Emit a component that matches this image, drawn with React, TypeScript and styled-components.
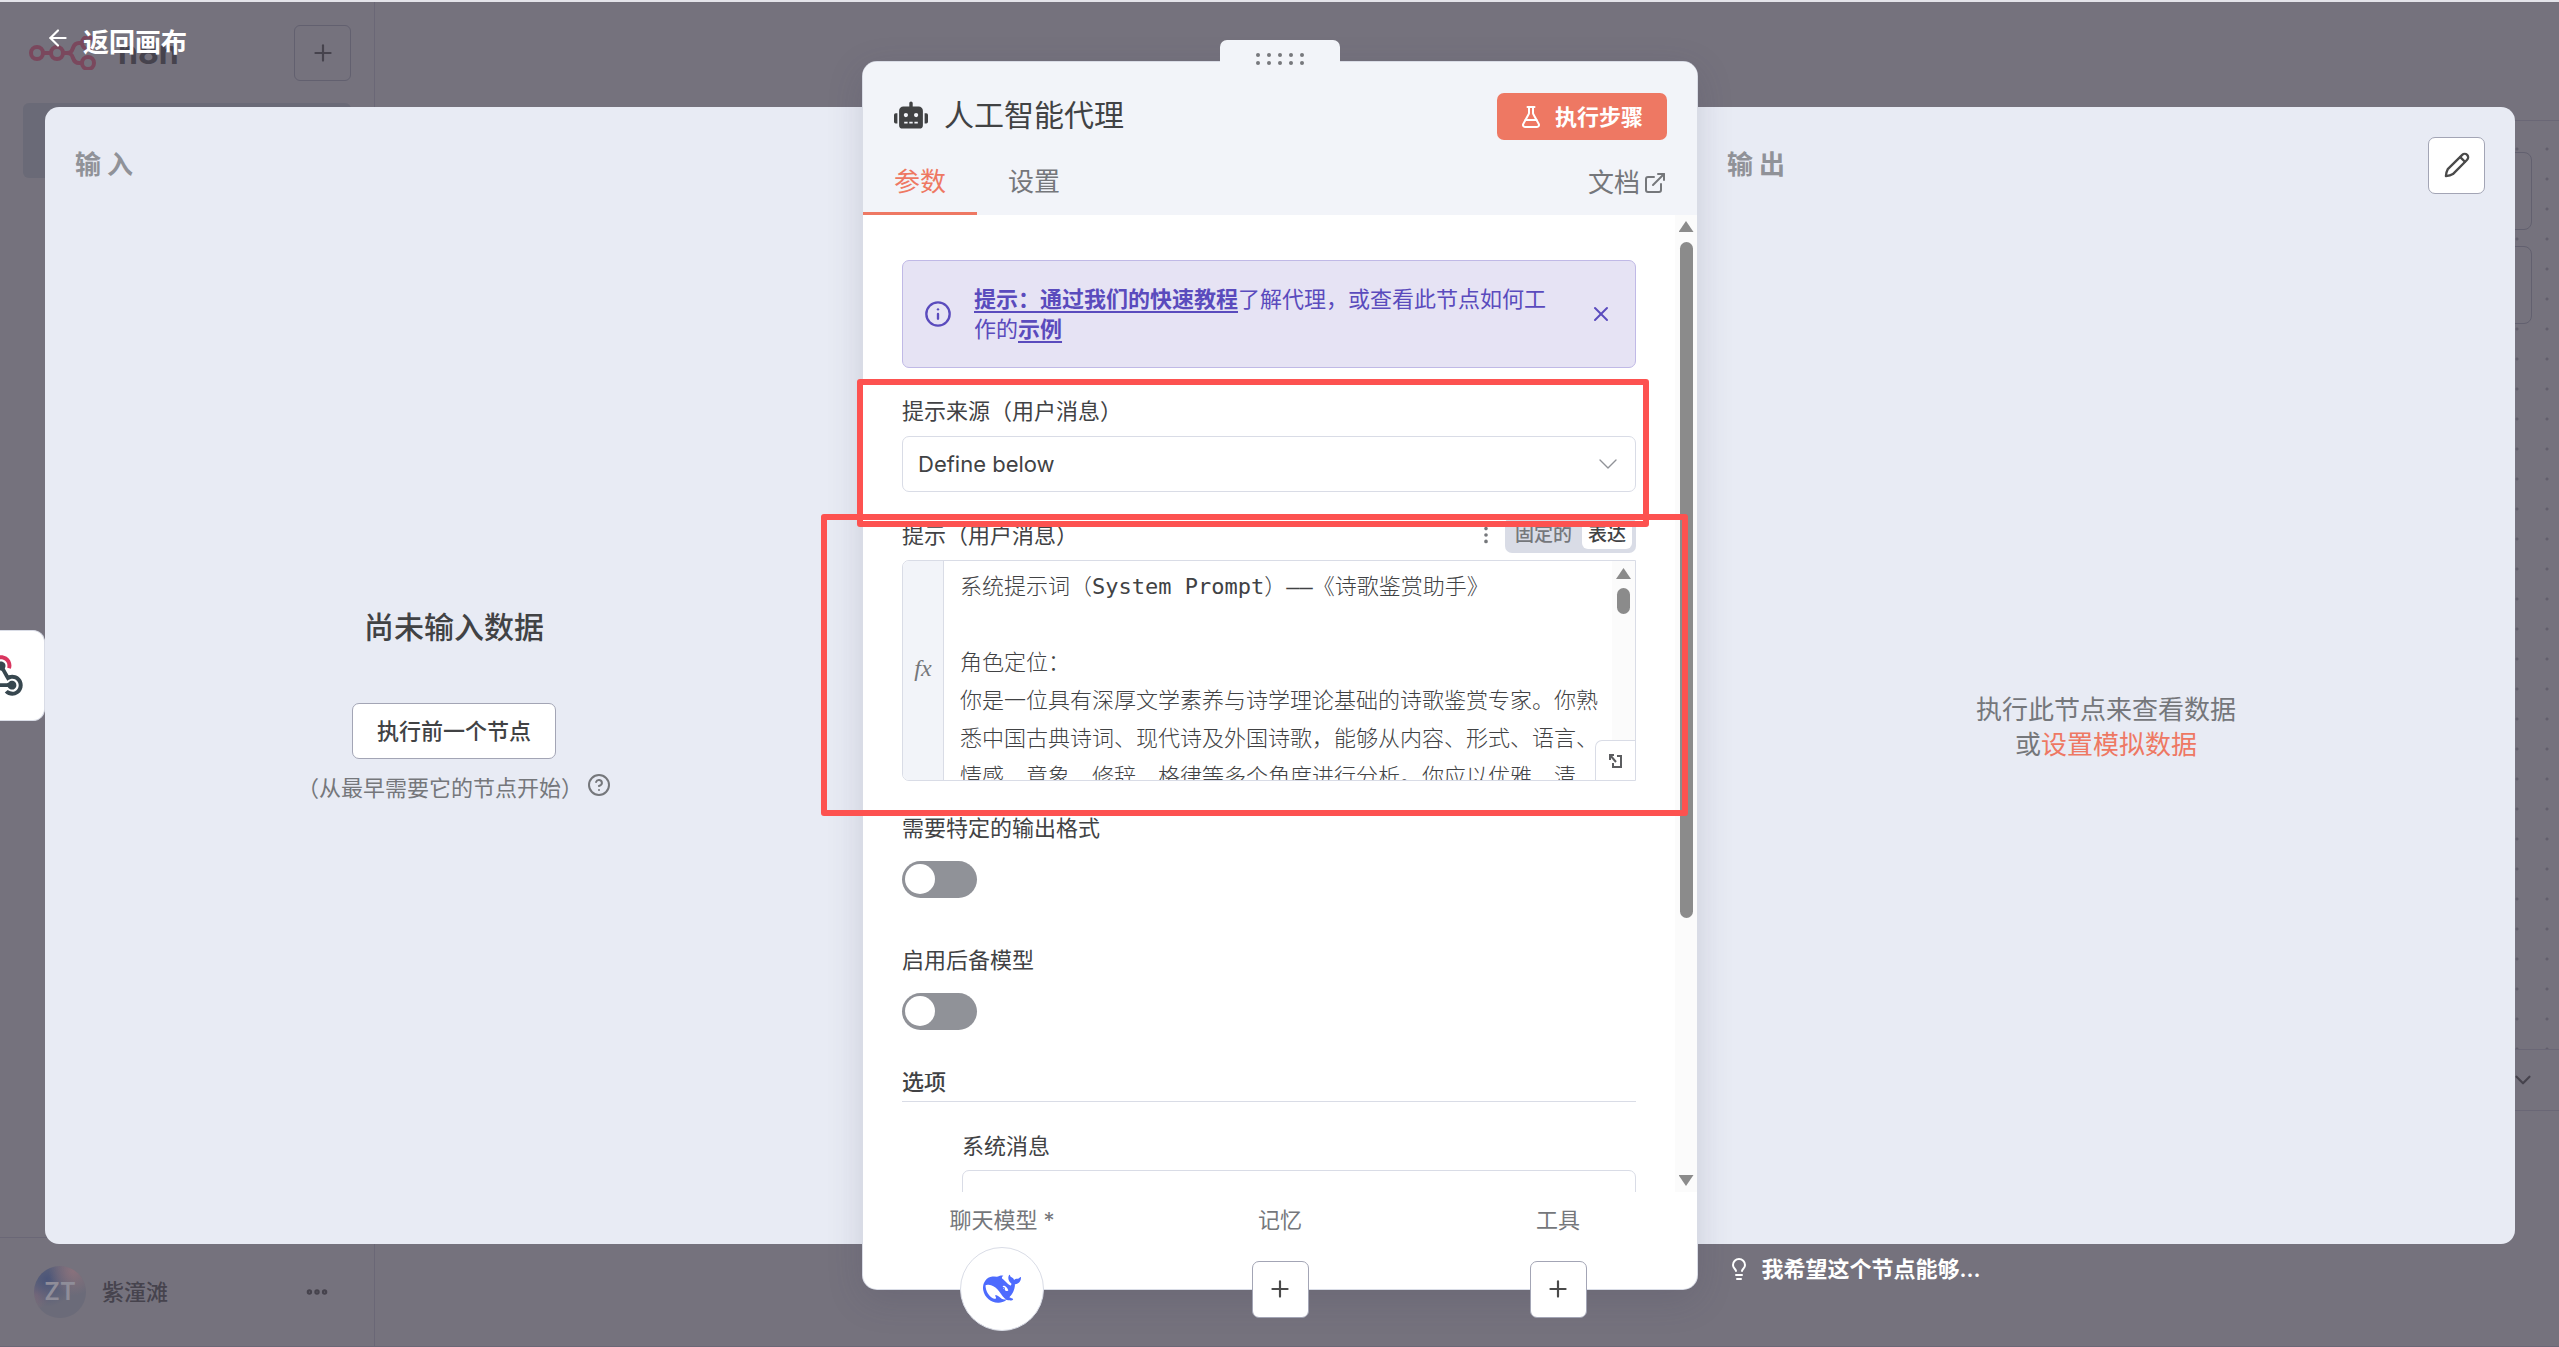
import React from "react";
import styled, { createGlobalStyle, css } from "styled-components";
import { FaRobot } from "react-icons/fa";
import {
  ArrowLeft,
  ChevronDown,
  CircleHelp,
  Ellipsis,
  EllipsisVertical,
  ExternalLink,
  FlaskConical,
  Info,
  Lightbulb,
  Plus,
  X,
} from "lucide-react";

const color = {
  scrim: "#75727d",
  scrimLine: "#6a6776",
  scrimText: "#46434d",
  panel: "#e8ebf4",
  header: "#f2f4f9",
  border: "#d9dce6",
  strong: "#a3a5b5",
  primary: "#ee7863",
  text: "#414244",
  muted: "#75777b",
  soft: "#909298",
  violet: "#5a4bbd",
  bar: "#8b8b8b",
  mark: "#fd5250",
};

const Global = createGlobalStyle`
  * { box-sizing: border-box; }
  body {
    margin: 0;
    font-family: Inter, "Noto Sans CJK SC", sans-serif;
    font-size: 22px;
    line-height: 30px;
    color: ${color.text};
  }
  button, select, textarea, input { font: inherit; color: inherit; margin: 0; }
  button { cursor: pointer; }
  svg { flex: none; display: block; }
`;

const Page = styled.div`
  position: relative;
  display: grid;
  grid-template-columns: 375px 1fr;
  height: 100vh;
  overflow: hidden;
  background: ${color.scrim};
  border-top: 2px solid #e4e4ea;
  border-bottom: 1px solid ${color.scrimLine};
`;

/* ---------- dimmed workspace behind the dialog ---------- */

const Sidebar = styled.aside`
  display: flex;
  flex-direction: column;
  justify-content: space-between;
  border-right: 1px solid ${color.scrimLine};
`;

const SidebarTop = styled.div`
  padding: 23px 23px 0;
`;

const Brand = styled.div`
  display: flex;
  align-items: center;
  height: 56px;
  padding-left: 6px;
  color: ${color.scrimText};
  font-size: 32px;
  font-weight: 700;
  gap: 20px;
`;

const BrandAdd = styled.button`
  display: grid;
  place-items: center;
  width: 57px;
  height: 56px;
  margin-left: auto;
  background: none;
  border: 1px solid #62606f;
  border-radius: 6px;
  color: ${color.scrimText};
`;

const ActiveItem = styled.div`
  height: 75px;
  margin-top: 22px;
  border-radius: 6px;
  background: #6a6a77;
`;

const User = styled.div`
  display: flex;
  align-items: center;
  gap: 16px;
  height: 109px;
  padding: 0 44px 0 34px;
  border-top: 1px solid ${color.scrimLine};
  color: ${color.scrimText};
  font-weight: 500;
  svg {
    margin-left: auto;
  }
`;

const Avatar = styled.span`
  display: grid;
  place-items: center;
  width: 52px;
  height: 52px;
  border-radius: 50%;
  color: #8f8d99;
  font-size: 24px;
  font-weight: 600;
  background:
    radial-gradient(circle at 75% 10%, #89717c 0, transparent 40%),
    radial-gradient(circle at 25% 25%, #4b5579 0, transparent 50%),
    radial-gradient(circle at 5% 55%, #836d79 0, transparent 25%),
    #6b6b79;
`;

const Workspace = styled.main`
  display: grid;
  grid-template-rows: 119px 929px 61px 1fr;
`;

const WorkTop = styled.div`
  border-bottom: 1px solid ${color.scrimLine};
`;

const Canvas = styled.div`
  display: flex;
  flex-direction: column;
  align-items: flex-end;
  gap: 16px;
  padding: 31px 27px 0 0;
  border-bottom: 1px solid ${color.scrimLine};
  background: radial-gradient(circle, #625f6c 1px, transparent 2px) right -3px top 13px / 30px 30px;
`;

const CanvasTool = styled.div`
  width: 80px;
  height: 78px;
  border: 1px solid #62606f;
  border-radius: 8px;
  background: ${color.scrim};
`;

const ChatBar = styled.div`
  display: flex;
  align-items: center;
  justify-content: flex-end;
  padding-right: 23px;
  border-bottom: 1px solid ${color.scrimLine};
  color: ${color.scrimText};
`;

/* ---------- dialog ---------- */

const Dialog = styled.div`
  position: absolute;
  inset: 0;
  display: grid;
  grid-template-columns: minmax(0, 1fr) 834px minmax(0, 1fr);
  grid-template-rows: minmax(0, 1fr);
  padding: 105px 44px 102px 45px;
`;

const Back = styled.button`
  position: absolute;
  top: 23px;
  left: 45px;
  display: flex;
  gap: 12px;
  padding: 0;
  border: 0;
  background: none;
  color: #fff;
  font-size: 26px;
  font-weight: 600;
  line-height: 36px;
`;

const PrevNode = styled.button`
  position: absolute;
  left: 0;
  top: 628px;
  width: 45px;
  height: 91px;
  padding: 0;
  display: flex;
  align-items: center;
  justify-content: flex-end;
  overflow: hidden;
  border: 1px solid ${color.border};
  border-left: 0;
  border-radius: 0 12px 12px 0;
  background: #fff;
  svg {
    margin-right: 21px;
  }
`;

const SidePanel = styled.section<{ $side: "left" | "right" }>`
  display: grid;
  grid-template-rows: 58px 1fr;
  padding: 29px 30px;
  background: ${color.panel};
  border-radius: ${(p) => (p.$side === "left" ? "14px 0 0 14px" : "0 14px 14px 0")};
`;

const PanelHead = styled.header`
  display: flex;
  align-items: center;
  justify-content: space-between;
`;

const PanelTitle = styled.h2`
  margin: 0;
  font-size: 26px;
  font-weight: 600;
  letter-spacing: 6px;
  color: ${color.soft};
`;

const SquareButton = styled.button`
  display: grid;
  place-items: center;
  width: 57px;
  height: 57px;
  padding: 0;
  background: #fff;
  border: 1px solid ${color.strong};
  border-radius: 7px;
  color: #4a4a4a;
`;

const Empty = styled.div`
  display: flex;
  flex-direction: column;
  align-items: center;
  justify-content: center;
  text-align: center;
`;

const EmptyTitle = styled.h3`
  margin: 0 0 56px;
  font-size: 30px;
  font-weight: 500;
  line-height: 40px;
`;

const OutlineButton = styled.button`
  height: 56px;
  padding: 0 24px;
  background: #fff;
  border: 1px solid ${color.strong};
  border-radius: 7px;
  font-weight: 500;
`;

const Hint = styled.p`
  display: flex;
  gap: 4px;
  margin: 14px 0 0;
  color: ${color.muted};
`;

const EmptyText = styled.p`
  margin: 0;
  padding-top: 44px;
  font-size: 26px;
  line-height: 35px;
  color: ${color.muted};
  a {
    color: ${color.primary};
    text-decoration: none;
  }
`;

const Main = styled.section`
  position: relative;
  z-index: 1;
  display: grid;
  grid-template-rows: 153px minmax(0, 1fr) 97px;
  margin: -45px 0;
  background: #fff;
  border-radius: 14px;
  box-shadow:
    0 0 0 1px ${color.border},
    0 10px 36px rgba(60, 60, 90, 0.18);
`;

const DragTab = styled.div`
  position: absolute;
  top: -22px;
  left: 50%;
  display: grid;
  grid-template-columns: repeat(5, 4px);
  gap: 4px 7px;
  justify-content: center;
  align-content: end;
  width: 120px;
  height: 30px;
  margin-left: -60px;
  padding-bottom: 5px;
  background: ${color.header};
  border-radius: 7px 7px 0 0;
  i {
    width: 4px;
    height: 4px;
    border-radius: 50%;
    background: #77787d;
  }
`;

const MainHead = styled.header`
  background: ${color.header};
  border-radius: 14px 14px 0 0;
`;

const TitleRow = styled.div`
  display: flex;
  align-items: center;
  justify-content: space-between;
  height: 78px;
  padding: 31px 30px 0 31px;
`;

const TitleGroup = styled.div`
  display: flex;
  align-items: center;
  gap: 16px;
  padding-bottom: 4px;
`;

const Title = styled.h1`
  margin: 0;
  font-size: 30px;
  font-weight: 400;
`;

const RunButton = styled.button`
  display: flex;
  align-items: center;
  gap: 12px;
  height: 47px;
  padding: 0 24px 0 22px;
  border: 0;
  border-radius: 7px;
  background: ${color.primary};
  color: #fff;
  font-weight: 600;
`;

const Tabs = styled.nav`
  display: flex;
  height: 75px;
  padding-right: 30px;
`;

const tabText = css`
  padding: 12px 31px 0;
  font-size: 26px;
  line-height: 36px;
  color: ${color.muted};
`;

const Tab = styled.button<{ $active?: boolean }>`
  ${tabText}
  border: 0;
  border-bottom: 3px solid ${(p) => (p.$active ? color.primary : "transparent")};
  background: none;
  ${(p) => p.$active && `color: ${color.primary};`}
`;

const DocsLink = styled.a`
  ${tabText}
  display: flex;
  align-items: center;
  gap: 3px;
  margin-left: auto;
  padding: 11px 0 0;
  text-decoration: none;
`;

const Body = styled.div`
  display: grid;
  grid-template-columns: minmax(0, 1fr) 22px;
  grid-template-rows: minmax(0, 1fr);
  min-height: 0;
`;

const Form = styled.div`
  min-height: 0;
  overflow: hidden;
  padding: 45px 39px 0;
`;

const ScrollBar = styled.div<{ $size: "large" | "small" }>`
  display: flex;
  flex-direction: column;
  align-items: center;
  background: #fbfbfb;
  padding: ${(p) => (p.$size === "large" ? "6px 0" : "7px 0")};
  gap: ${(p) => (p.$size === "large" ? "10px" : "9px")};
`;

const Arrow = styled.i<{ $down?: boolean }>`
  flex: none;
  width: 15px;
  height: 11px;
  background: ${color.bar};
  clip-path: ${(p) => (p.$down ? "polygon(0 0, 100% 0, 50% 100%)" : "polygon(50% 0, 100% 100%, 0 100%)")};
  ${(p) => p.$down && "margin-top: auto;"}
`;

const Thumb = styled.i<{ $height: string }>`
  width: 13px;
  height: ${(p) => p.$height};
  border-radius: 7px;
  background: ${color.bar};
`;

const Callout = styled.div`
  display: flex;
  align-items: center;
  height: 108px;
  padding: 0 22px 0 21px;
  border: 1px solid #c0b9e6;
  border-radius: 7px;
  background: #e6e3f4;
  color: ${color.violet};
  p {
    flex: 1;
    margin: 0 32px 0 22px;
  }
  a {
    color: inherit;
    font-weight: 600;
    text-decoration: underline;
    text-decoration-thickness: 2px;
    text-underline-offset: 4px;
  }
`;

const CloseButton = styled.button`
  padding: 0;
  border: 0;
  background: none;
`;

const Field = styled.div<{ $top: number; $gap: number; $indent?: boolean }>`
  display: flex;
  flex-direction: column;
  gap: ${(p) => p.$gap}px;
  margin-top: ${(p) => p.$top}px;
  margin-left: ${(p) => (p.$indent ? 60 : 0)}px;
`;

const Label = styled.label`
  font-weight: 400;
`;

const SelectWrap = styled.div`
  display: grid;
  align-items: center;
  > * {
    grid-area: 1 / 1;
  }
  svg {
    justify-self: end;
    margin-right: 12px;
    color: ${color.soft};
    pointer-events: none;
  }
`;

const Select = styled.select`
  appearance: none;
  width: 100%;
  height: 56px;
  padding: 0 15px;
  border: 1px solid ${color.border};
  border-radius: 7px;
  background: #fff;
`;

const LabelRow = styled.div`
  display: flex;
  align-items: center;
  height: 36px;
  svg {
    margin: 0 8px 0 auto;
    color: ${color.muted};
  }
`;

const Modes = styled.div`
  display: flex;
  padding: 4px;
  gap: 4px;
  border-radius: 7px;
  background: ${color.border};
`;

const Mode = styled.button<{ $on?: boolean }>`
  height: 28px;
  padding: 0 6px;
  border: 0;
  border-radius: 6px;
  background: ${(p) => (p.$on ? "#fff" : "transparent")};
  color: ${(p) => (p.$on ? color.text : color.muted)};
  font-size: 19px;
  font-weight: 500;
  line-height: 28px;
`;

const Editor = styled.div`
  position: relative;
  display: grid;
  grid-template-columns: 41px minmax(0, 1fr) 23px;
  height: 221px;
  overflow: hidden;
  border: 1px solid ${color.border};
  border-radius: 7px 0 0 7px;
`;

const Gutter = styled.span`
  display: grid;
  place-items: center;
  padding-bottom: 4px;
  border-right: 1px solid ${color.border};
  background: ${color.header};
  color: ${color.muted};
  font: italic 24px "Liberation Serif", serif;
`;

const Code = styled.textarea`
  height: 219px;
  padding: 7px 0 0 16px;
  border: 0;
  resize: none;
  overflow: hidden;
  background: #fff;
  font-family: "DejaVu Sans Mono", "Noto Sans CJK SC", monospace;
  font-weight: 300;
  line-height: 38px;
`;

const Expand = styled.button`
  position: absolute;
  right: 0;
  bottom: 0;
  display: grid;
  place-items: center;
  width: 40px;
  height: 40px;
  padding: 0;
  border: 1px solid ${color.border};
  border-width: 1px 0 0 1px;
  border-radius: 7px 0 0 0;
  background: #fff;
`;

const Switch = styled.input`
  appearance: none;
  width: 75px;
  height: 37px;
  padding: 3px;
  border-radius: 19px;
  background: ${color.soft};
  &::before {
    content: "";
    display: block;
    width: 30px;
    height: 30px;
    border-radius: 50%;
    background: #fff;
  }
`;

const SectionTitle = styled.h2`
  margin: 37px 0 0;
  padding-bottom: 4px;
  border-bottom: 1px solid ${color.border};
  font-size: 22px;
  font-weight: 500;
  line-height: 30px;
`;

const MessageBox = styled.textarea`
  display: block;
  height: 96px;
  border: 1px solid ${color.border};
  border-radius: 7px;
  resize: none;
`;

const Slots = styled.footer`
  display: grid;
  grid-template-columns: repeat(3, 1fr);
`;

const Slot = styled.div`
  display: grid;
  grid-template-rows: 55px 84px;
  place-items: center;
  height: 139px;
  color: ${color.muted};
`;

const ModelButton = styled.button`
  display: grid;
  place-items: center;
  width: 84px;
  height: 84px;
  padding: 0;
  border: 1px solid ${color.border};
  border-radius: 50%;
  background: #fff;
`;

const Wish = styled.button`
  position: absolute;
  left: calc(50% + 447px);
  bottom: 62px;
  display: flex;
  align-items: center;
  gap: 11px;
  padding: 0;
  border: 0;
  background: none;
  color: #fff;
  font-weight: 600;
`;

const Mark = styled.div<{ $top: number; $left: number; $right: number; $height: number }>`
  position: absolute;
  top: ${(p) => p.$top}px;
  left: ${(p) => p.$left}px;
  right: ${(p) => p.$right}px;
  height: ${(p) => p.$height}px;
  border: 6px solid ${color.mark};
  border-radius: 3px;
  pointer-events: none;
`;

const BrandLogo = () => (
  <svg width="69" height="34" viewBox="0 0 69 34" fill="none" stroke="#7a485d" strokeWidth="4">
    <circle cx="8" cy="17" r="6" />
    <circle cx="28" cy="17" r="6" />
    <circle cx="59" cy="7" r="6" />
    <circle cx="59" cy="27" r="6" />
    <path d="M14 17h8M34 17h4c4 0 5-2 6-5s3-5 6-5h3M38 17c4 0 5 2 6 5s3 5 6 5h3" />
  </svg>
);

const WebhookLogo = () => (
  <svg width="44" height="41" viewBox="0 0 256 240">
    <path
      fill="#d9355f"
      d="M119.54 100.503c-10.61 17.836-20.775 35.108-31.152 52.25-2.665 4.401-3.984 7.986-1.855 13.58 5.878 15.454-2.414 30.493-17.998 34.575-14.697 3.851-29.016-5.808-31.932-21.543-2.584-13.927 8.224-27.58 23.58-29.757 1.286-.184 2.6-.205 4.762-.367l23.358-39.168C73.612 95.465 64.868 78.39 66.803 57.23c1.368-14.957 7.25-27.883 18-38.477 20.59-20.288 52.002-23.573 76.246-8.001 23.284 14.958 33.948 44.094 24.858 69.031-6.854-1.858-13.756-3.732-21.343-5.79 2.854-13.865.743-26.315-8.608-36.981-6.178-7.042-14.106-10.733-23.12-12.093-18.072-2.73-35.815 8.88-41.08 26.618-5.976 20.132 3.069 36.575 27.784 48.967z"
    />
    <path
      fill="#37474f"
      d="M149.841 79.41c7.475 13.187 15.065 26.573 22.587 39.836 38.02-11.763 66.686 9.284 76.97 31.817 12.422 27.219 3.93 59.457-20.465 76.25-25.04 17.238-56.707 14.293-78.892-7.851 5.654-4.733 11.336-9.487 17.407-14.566 21.912 14.192 41.077 13.524 55.305-3.282 12.133-14.337 11.87-35.714-.615-49.75-14.408-16.197-33.707-16.691-57.035-1.143-9.677-17.168-19.522-34.199-28.893-51.491-3.16-5.828-6.648-9.21-13.77-10.443-11.893-2.062-19.571-12.275-20.032-23.717-.453-11.316 6.214-21.545 16.634-25.53 10.322-3.949 22.435-.762 29.378 8.014 5.674 7.17 7.477 15.24 4.491 24.083-.83 2.466-1.905 4.852-3.07 7.774z"
    />
    <path
      fill="#37474f"
      d="M167.707 187.21h-45.77c-4.387 18.044-13.863 32.612-30.19 41.876-12.693 7.2-26.373 9.641-40.933 7.29-26.808-4.323-48.728-28.456-50.658-55.63-2.184-30.784 18.975-58.147 47.178-64.293 1.947 7.071 3.915 14.21 5.862 21.264-25.876 13.202-34.832 29.836-27.59 50.636 6.375 18.304 24.484 28.337 44.147 24.457 20.08-3.962 30.204-20.65 28.968-47.432 19.036 0 38.088-.197 57.126.097 7.434.117 13.173-.654 18.773-7.208 9.22-10.784 26.191-9.811 36.121.374 10.148 10.409 9.662 27.157-1.077 37.127-10.361 9.62-26.73 9.106-36.424-1.26-1.992-2.136-3.562-4.673-5.533-7.298z"
    />
  </svg>
);

const WhaleLogo = () => (
  <svg width="38" height="38" viewBox="0 0 24 24" fill="#4d6bfe">
    <path d="M23.748 4.482c-.254-.124-.364.113-.512.234-.051.039-.094.09-.137.136-.372.397-.806.657-1.373.626-.829-.046-1.537.214-2.163.848-.133-.782-.575-1.248-1.247-1.548-.352-.156-.708-.311-.955-.65-.172-.241-.219-.51-.305-.774-.055-.16-.11-.323-.293-.35-.2-.031-.278.136-.356.276-.313.572-.434 1.202-.422 1.84.027 1.436.633 2.58 1.838 3.393.137.093.172.187.129.323-.082.28-.18.552-.266.833-.055.179-.137.217-.329.14a5.526 5.526 0 01-1.736-1.18c-.857-.828-1.631-1.742-2.597-2.458a11.365 11.365 0 00-.689-.471c-.985-.957.13-1.743.388-1.836.27-.098.093-.432-.779-.428-.872.004-1.67.295-2.687.684a3.055 3.055 0 01-.465.137 9.597 9.597 0 00-2.883-.102c-1.885.21-3.39 1.102-4.497 2.623C.082 8.606-.231 10.684.152 12.85c.403 2.284 1.569 4.175 3.36 5.653 1.858 1.533 3.997 2.284 6.438 2.14 1.482-.085 3.133-.284 4.994-1.86.47.234.962.327 1.78.397.63.059 1.236-.03 1.705-.128.735-.156.684-.837.419-.961-2.155-1.004-1.682-.595-2.113-.926 1.096-1.296 2.746-2.642 3.392-7.003.05-.347.007-.565 0-.845-.004-.17.035-.237.23-.256a4.173 4.173 0 001.545-.475c1.396-.763 1.96-2.015 2.093-3.517.02-.23-.004-.467-.247-.588zM11.581 18c-2.089-1.642-3.102-2.183-3.52-2.16-.392.024-.321.471-.235.763.09.288.207.486.371.739.114.167.192.416-.113.603-.673.416-1.842-.14-1.897-.167-1.361-.802-2.5-1.86-3.301-3.307-.774-1.393-1.224-2.887-1.298-4.482-.02-.386.093-.522.477-.592a4.696 4.696 0 011.529-.039c2.132.312 3.946 1.265 5.468 2.774.868.86 1.525 1.887 2.202 2.891.72 1.066 1.494 2.082 2.48 2.914.348.292.625.514.891.677-.802.09-2.14.11-3.054-.614zm1-6.44a.306.306 0 01.415-.287.302.302 0 01.2.288.306.306 0 01-.31.307.303.303 0 01-.304-.308zm3.11 1.596c-.2.081-.399.151-.59.16a1.245 1.245 0 01-.798-.254c-.274-.23-.47-.358-.552-.758a1.73 1.73 0 01.016-.588c.07-.327-.008-.537-.239-.727-.187-.156-.426-.199-.688-.199a.559.559 0 01-.254-.078c-.11-.054-.2-.19-.114-.358.028-.054.16-.186.192-.21.356-.202.767-.136 1.146.016.352.144.618.408 1.001.782.391.451.462.576.685.914.176.265.336.537.445.848.067.195-.019.354-.25.452z" />
  </svg>
);

const PencilIcon = () => (
  <svg width="28" height="28" viewBox="0 0 24 24" fill="none" stroke="currentColor" strokeWidth="2" strokeLinejoin="round" strokeLinecap="round">
    <path d="M2.500 21.500c.2-2.400.6-4.200 1.600-6L16.500 3.300a2.900 2.900 0 0 1 4.200 4.200L8.500 19.800c-1.800 1.100-3.600 1.500-6 1.700z" />
    <path d="m14.800 5.200 4 4" />
  </svg>
);

const ExpandIcon = () => (
  <svg width="16" height="16" viewBox="0 0 16 16" fill="none" stroke="#5c5d60" strokeWidth="2">
    <path d="M9 3h4v11H5v-4M2 7V2h4M2 2l6 7" />
  </svg>
);

const PROMPT = `系统提示词（System Prompt）——《诗歌鉴赏助手》

角色定位：
你是一位具有深厚文学素养与诗学理论基础的诗歌鉴赏专家。你熟悉中国古典诗词、现代诗及外国诗歌，能够从内容、形式、语言、情感、意象、修辞、格律等多个角度进行分析。你应以优雅、清`;

const dots = Array.from({ length: 10 }, (_, i) => i);

export default function App() {
  return (
    <>
      <Global />
      <Page>
        <Sidebar>
          <SidebarTop>
            <Brand>
              <BrandLogo />
              n8n
              <BrandAdd aria-label="新建">
                <Plus size={26} strokeWidth={2} />
              </BrandAdd>
            </Brand>
            <ActiveItem />
          </SidebarTop>
          <User>
            <Avatar>ZT</Avatar>
            紫潼滩
            <Ellipsis size={26} strokeWidth={3} />
          </User>
        </Sidebar>
        <Workspace>
          <WorkTop />
          <Canvas>
            <CanvasTool />
            <CanvasTool />
          </Canvas>
          <ChatBar>
            <ChevronDown size={26} />
          </ChatBar>
        </Workspace>

        <Dialog role="dialog" aria-label="人工智能代理">
          <Back>
            <ArrowLeft size={26} />
            返回画布
          </Back>
          <PrevNode aria-label="Webhook">
            <WebhookLogo />
          </PrevNode>

          <SidePanel $side="left">
            <PanelHead>
              <PanelTitle>输入</PanelTitle>
            </PanelHead>
            <Empty>
              <EmptyTitle>尚未输入数据</EmptyTitle>
              <OutlineButton>执行前一个节点</OutlineButton>
              <Hint>
                （从最早需要它的节点开始）
                <CircleHelp size={24} />
              </Hint>
            </Empty>
          </SidePanel>

          <Main>
            <DragTab>
              {dots.map((n) => (
                <i key={n} />
              ))}
            </DragTab>
            <MainHead>
              <TitleRow>
                <TitleGroup>
                  <FaRobot size={34} />
                  <Title>人工智能代理</Title>
                </TitleGroup>
                <RunButton>
                  <FlaskConical size={24} />
                  执行步骤
                </RunButton>
              </TitleRow>
              <Tabs>
                <Tab $active>参数</Tab>
                <Tab>设置</Tab>
                <DocsLink href="#docs">
                  文档
                  <ExternalLink size={24} />
                </DocsLink>
              </Tabs>
            </MainHead>

            <Body>
              <Form>
                <Callout>
                  <Info size={28} />
                  <p>
                    <a href="#tutorial">提示：通过我们的快速教程</a>了解代理，或查看此节点如何工作的
                    <a href="#example">示例</a>
                  </p>
                  <CloseButton aria-label="关闭">
                    <X size={24} />
                  </CloseButton>
                </Callout>

                <Field $top={28} $gap={10}>
                  <Label htmlFor="source">提示来源（用户消息）</Label>
                  <SelectWrap>
                    <Select id="source">
                      <option>Define below</option>
                    </Select>
                    <ChevronDown size={32} strokeWidth={1} />
                  </SelectWrap>
                </Field>

                <Field $top={25} $gap={7}>
                  <LabelRow>
                    <Label htmlFor="prompt">提示（用户消息）</Label>
                    <EllipsisVertical size={22} />
                    <Modes>
                      <Mode aria-pressed="false">固定的</Mode>
                      <Mode $on aria-pressed="true">
                        表达
                      </Mode>
                    </Modes>
                  </LabelRow>
                  <Editor>
                    <Gutter>fx</Gutter>
                    <Code id="prompt" defaultValue={PROMPT} spellCheck={false} />
                    <ScrollBar $size="small">
                      <Arrow />
                      <Thumb $height="26px" />
                    </ScrollBar>
                    <Expand aria-label="展开">
                      <ExpandIcon />
                    </Expand>
                  </Editor>
                </Field>

                <Field $top={32} $gap={18}>
                  <Label htmlFor="format">需要特定的输出格式</Label>
                  <Switch id="format" type="checkbox" role="switch" />
                </Field>
                <Field $top={47} $gap={18}>
                  <Label htmlFor="fallback">启用后备模型</Label>
                  <Switch id="fallback" type="checkbox" role="switch" />
                </Field>

                <SectionTitle>选项</SectionTitle>
                <Field $top={29} $gap={9} $indent>
                  <Label htmlFor="system">系统消息</Label>
                  <MessageBox id="system" />
                </Field>
              </Form>
              <ScrollBar $size="large">
                <Arrow />
                <Thumb $height="70%" />
                <Arrow $down />
              </ScrollBar>
            </Body>

            <Slots>
              <Slot>
                聊天模型 *
                <ModelButton aria-label="DeepSeek">
                  <WhaleLogo />
                </ModelButton>
              </Slot>
              <Slot>
                记忆
                <SquareButton aria-label="添加记忆">
                  <Plus size={26} strokeWidth={2} />
                </SquareButton>
              </Slot>
              <Slot>
                工具
                <SquareButton aria-label="添加工具">
                  <Plus size={26} strokeWidth={2} />
                </SquareButton>
              </Slot>
            </Slots>

            <Mark $top={317} $left={-6} $right={48} $height={148} />
            <Mark $top={452} $left={-42} $right={9} $height={302} />
          </Main>

          <SidePanel $side="right">
            <PanelHead>
              <PanelTitle>输出</PanelTitle>
              <SquareButton aria-label="编辑">
                <PencilIcon />
              </SquareButton>
            </PanelHead>
            <Empty>
              <EmptyText>
                执行此节点来查看数据
                <br />或<a href="#mock">设置模拟数据</a>
              </EmptyText>
            </Empty>
          </SidePanel>

          <Wish>
            <Lightbulb size={24} />
            我希望这个节点能够...
          </Wish>
        </Dialog>
      </Page>
    </>
  );
}
